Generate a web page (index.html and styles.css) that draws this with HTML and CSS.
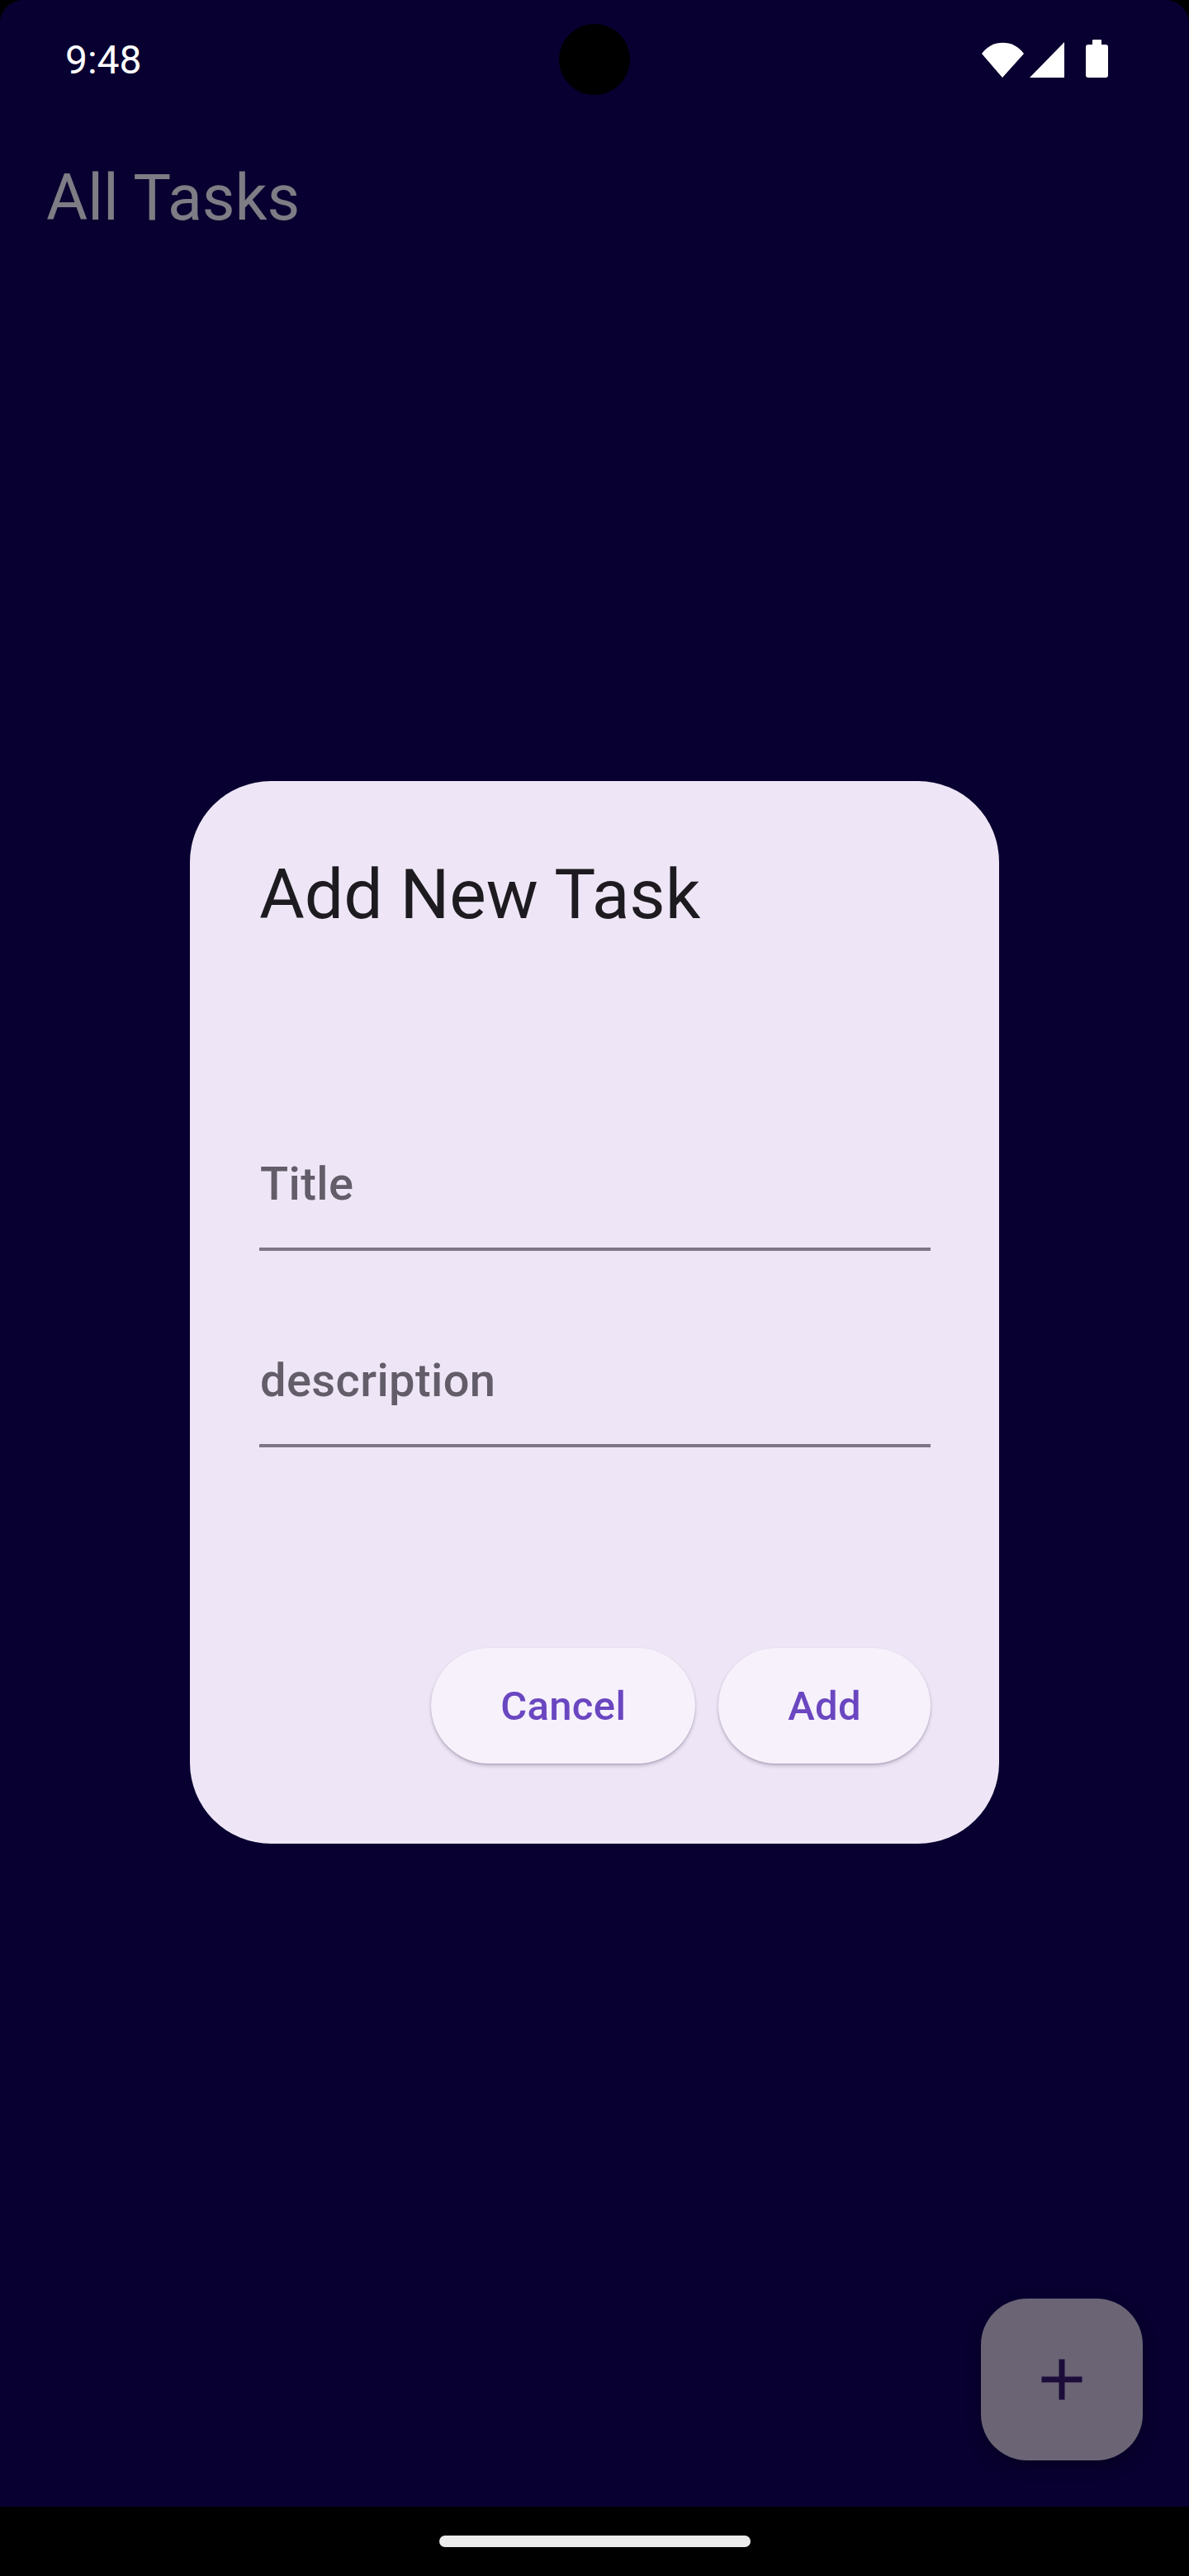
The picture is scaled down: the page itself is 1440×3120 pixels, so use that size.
FILE: index.html
```html
<!DOCTYPE html>
<html lang="en">
<head>
<meta charset="utf-8">
<title>All Tasks</title>
<link rel="stylesheet" href="styles.css">
</head>
<body>
<div class="screen">
  <div class="status-bar">
    <span class="time">9:48</span>
    <svg class="status-icons" width="154" height="46" viewBox="0 0 154 46">
      <path d="M26 46 L1 17 A31 31 0 0 1 52 17 Z" fill="#fff"/>
      <path d="M59 46 L101 46 L101 3 Z" fill="#fff"/>
      <rect x="127" y="6" width="27" height="40" rx="3" fill="#fff"/>
      <rect x="135" y="0" width="11" height="8" rx="1" fill="#fff"/>
    </svg>
  </div>
  <div class="camera"></div>
  <header class="app-bar">All Tasks</header>
  <main class="content"></main>
  <div class="fab-row">
    <button class="fab" aria-label="Add task">
      <svg width="84" height="84" viewBox="0 0 84 84">
        <path d="M42 17.5 V66.5 M17.5 42 H66.5" stroke="#1c0c3a" stroke-width="7"/>
      </svg>
    </button>
  </div>
  <div class="nav-bar"><div class="handle"></div></div>

  <div class="overlay">
    <div class="dialog">
      <h2 class="dialog-title">Add New Task</h2>
      <div class="fields">
        <div class="field"><span class="label">Title</span></div>
        <div class="field"><span class="label">description</span></div>
      </div>
      <div class="actions">
        <button class="btn">Cancel</button>
        <button class="btn">Add</button>
      </div>
    </div>
  </div>
</div>
</body>
</html>
```
FILE: styles.css
```css
* { box-sizing: border-box; }
html, body { margin: 0; padding: 0; background: #000; }
body { font-family: Roboto, "Noto Sans", sans-serif; }

.screen {
  position: relative;
  width: 1440px;
  height: 3120px;
  background: #080030;
  border-radius: 28px 28px 0 0;
  overflow: hidden;
  display: flex;
  flex-direction: column;
}

.status-bar {
  height: 143px;
  flex: none;
  display: flex;
  align-items: flex-start;
  justify-content: space-between;
  padding: 48px 98px 0 79px;
}
.time {
  color: #fff;
  font-size: 48px;
  line-height: 50px;
  font-weight: 400;
}
.status-icons { display: block; }

.camera {
  position: absolute;
  left: 677px;
  top: 29px;
  width: 86px;
  height: 86px;
  border-radius: 50%;
  background: #000;
}

.app-bar {
  flex: none;
  padding: 59px 0 0 56px;
  font-size: 77px;
  line-height: 77px;
  color: #7e7c84;
  font-weight: 400;
}

.content { flex: 1; }

.fab-row {
  flex: none;
  display: flex;
  justify-content: flex-end;
  padding: 0 56px 56px 0;
}
.fab {
  width: 196px;
  height: 196px;
  border: none;
  border-radius: 56px;
  background: #6a6475;
  display: flex;
  align-items: center;
  justify-content: center;
  padding: 0;
  box-shadow: 0 8px 18px rgba(0, 0, 0, 0.25);
}
.fab svg { display: block; }

.nav-bar {
  flex: none;
  height: 84px;
  background: #000;
  display: flex;
  justify-content: center;
  padding-top: 35px;
}
.handle {
  width: 377px;
  height: 14px;
  border-radius: 7px;
  background: #ebebeb;
}

.overlay {
  position: absolute;
  left: 0;
  right: 0;
  top: 143px;
  bottom: 84px;
  display: flex;
  align-items: center;
  justify-content: center;
}

.dialog {
  width: 980px;
  background: #eee6f6;
  border-radius: 98px;
  padding: 82px 83px 97px 84px;
}
.dialog-title {
  margin: 0;
  font-size: 84px;
  line-height: 112px;
  font-weight: 400;
  color: #1d1b20;
}

.fields {
  margin-top: 179px;
  display: flex;
  flex-direction: column;
  gap: 42px;
}
.field {
  height: 196px;
  padding-top: 73px;
  border-bottom: 4px solid #7d7785;
}
.label {
  display: block;
  font-size: 56px;
  line-height: 84px;
  font-weight: 500;
  letter-spacing: 0.4px;
  color: #625d69;
  padding-left: 1px;
}

.actions {
  margin-top: 243px;
  display: flex;
  justify-content: flex-end;
  gap: 28px;
}
.btn {
  height: 140px;
  padding: 0 84px;
  border: none;
  border-radius: 70px;
  background: #f6f1fb;
  color: #6a46c0;
  font-family: Roboto, "Noto Sans", sans-serif;
  font-size: 49px;
  font-weight: 500;
  letter-spacing: 0.35px;
  box-shadow: 0 3px 4px rgba(60, 40, 80, 0.22), 0 1px 2px rgba(60, 40, 80, 0.2);
}
```
